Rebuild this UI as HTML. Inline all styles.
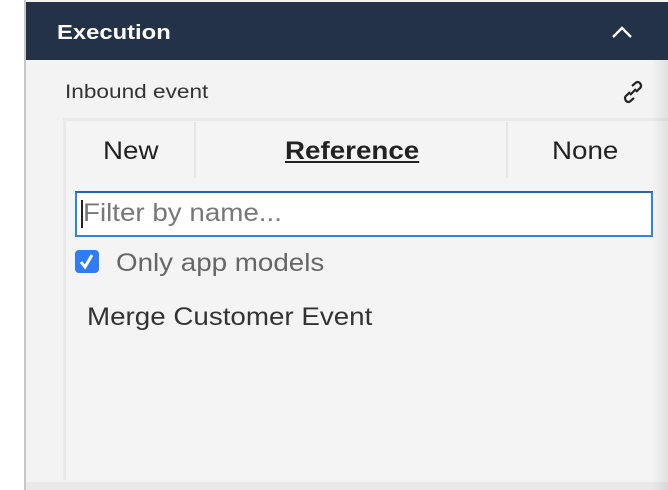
<!DOCTYPE html>
<html><head><style>
*{margin:0;padding:0;box-sizing:border-box}
body{width:668px;height:490px;background:#fff;font-family:"Liberation Sans",sans-serif;position:relative;overflow:hidden}
.side{position:absolute;left:24px;top:0;width:644px;height:490px;background:#f3f3f3;border-left:2px solid #c8c8c8}
.hdr{position:absolute;left:26px;top:2px;width:642px;height:58px;background:#243247;color:#fff;font-weight:bold;font-size:20px}
.abs{position:absolute;transform-origin:0 0;white-space:nowrap}
.s1{transform:scaleX(1.19)}
.s2{transform:scaleX(1.11)}
.panel{position:absolute;left:63px;top:118px;width:605px;height:362px;background:#f4f4f4;border-left:3px solid #e9e9e9;border-top:3px solid #e9e9e9}
.bot{position:absolute;left:26px;top:482px;width:642px;height:8px;background:#e9e9e9}
.shade{position:absolute;right:0;top:60px;width:16px;height:430px;background:linear-gradient(to right,rgba(0,0,0,0),rgba(0,0,0,0.08))}
</style></head><body>
<div class="side"></div>
<div class="hdr"><span class="abs s1" style="left:31px;top:20px">Execution</span>
<svg class="abs" style="left:585px;top:24px" width="22" height="14" viewBox="0 0 22 14"><path d="M2 11 L11 2 L20 11" fill="none" stroke="#fff" stroke-width="2.4"/></svg></div>
<div class="abs s1" style="left:65px;top:82px;font-size:19px;color:#333">Inbound event</div>
<svg class="abs" style="left:622px;top:80px" width="22" height="24" viewBox="0 0 22 24"><g fill="none" stroke="#222" stroke-width="2.2"><path d="M10 6 L14 2.5 Q17 1 18.5 4 Q20 7 17 9 L14 12"/><path d="M12 18 L8 21.5 Q5 23 3.5 20 Q2 17 5 15 L8 12"/><path d="M8 15 L14 9"/></g></svg>
<div class="panel"></div>
<div class="abs" style="left:194px;top:122px;width:2px;height:56px;background:#e6e6e6"></div>
<div class="abs" style="left:506px;top:122px;width:2px;height:56px;background:#e6e6e6"></div>
<div class="abs s2" style="left:103px;top:137px;font-size:25px;color:#222">New</div>
<div class="abs s2" style="left:285px;top:137px;font-size:25px;color:#222;font-weight:bold;text-decoration:underline">Reference</div>
<div class="abs s2" style="left:552px;top:137px;font-size:25px;color:#222">None</div>
<div class="abs" style="left:75px;top:191px;width:578px;height:46px;background:#fff;border:2px solid #2f84de;border-top-color:#2a66a8"></div>
<div class="abs" style="left:81px;top:200px;width:2px;height:28px;background:#222"></div>
<div class="abs s2" style="left:83px;top:199px;font-size:25px;color:#777">Filter by name...</div>
<div class="abs" style="left:75px;top:250px;width:24px;height:23px;background:#2f7cf6;border-radius:4px"></div>
<svg class="abs" style="left:75px;top:250px" width="24" height="23"><path d="M6 12 L10 17 L17 5" fill="none" stroke="#fff" stroke-width="3"/></svg>
<div class="abs s2" style="left:116px;top:249px;font-size:25px;color:#666">Only app models</div>
<div class="abs s2" style="left:87px;top:303px;font-size:25px;color:#333">Merge Customer Event</div>
<div class="bot"></div>
<div class="shade"></div>
</body></html>
